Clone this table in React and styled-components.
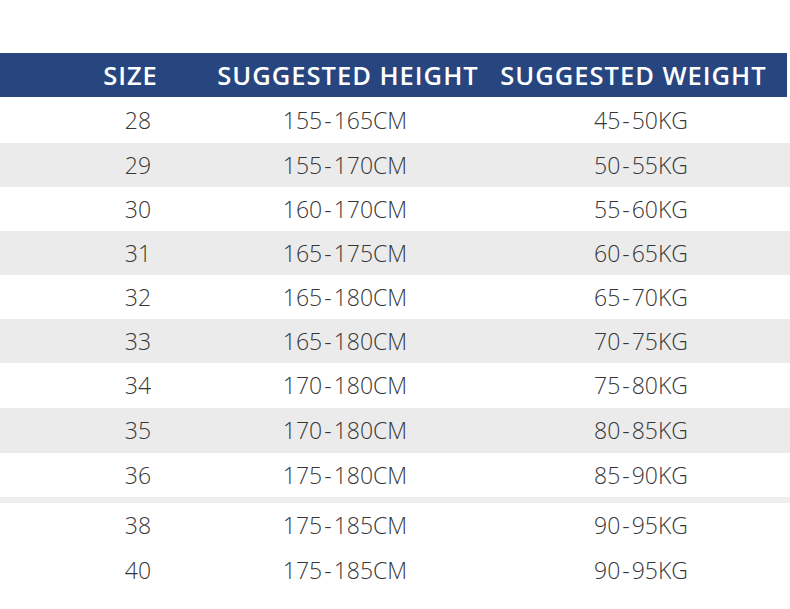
import React from 'react'
import styled, { createGlobalStyle } from 'styled-components'

const GlobalStyle = createGlobalStyle`
  html, body {
    margin: 0;
    padding: 0;
    background: #ffffff;
  }
`

const Page = styled.div`
  width: 790px;
  height: 609px;
  padding-top: 53px;
  box-sizing: border-box;
  background: #ffffff;
  overflow: hidden;
`

const HeaderBar = styled.div`
  display: grid;
  grid-template-columns: 171px 264px 307px;
  padding-left: 45px;
  margin-right: 3px;
  height: 44px;
  align-items: center;
  background: #27467f;
  color: #ffffff;
  font-family: 'Open Sans', 'Noto Sans', sans-serif;
  font-weight: 600;
  font-size: 25.5px;
  letter-spacing: 1px;
`

const HeaderCell = styled.div`
  text-align: center;
  white-space: nowrap;
  line-height: 1;
  padding-top: 2px;
`

const Row = styled.div`
  display: grid;
  grid-template-columns: 120px 294px 298px;
  padding-left: 78px;
  height: ${p => p.$h}px;
  align-items: center;
  background: ${p => (p.$shade ? '#ebebeb' : '#ffffff')};
  color: #363636;
  font-family: 'Open Sans', 'Noto Sans', sans-serif;
  font-weight: 300;
  font-size: 23px;
`

const Cell = styled.div`
  text-align: center;
  white-space: nowrap;
  line-height: 1;
`

const Dash = styled.span`
  margin: 0 2px;
`

const Divider = styled.div`
  height: 6px;
  background: #eeeeee;
`

const rows = [
  ['28', '155-165CM', '45-50KG', 46, false],
  ['29', '155-170CM', '50-55KG', 44, true],
  ['30', '160-170CM', '55-60KG', 44, false],
  ['31', '165-175CM', '60-65KG', 44, true],
  ['32', '165-180CM', '65-70KG', 44, false],
  ['33', '165-180CM', '70-75KG', 44, true],
  ['34', '170-180CM', '75-80KG', 45, false],
  ['35', '170-180CM', '80-85KG', 45, true],
  ['36', '175-180CM', '85-90KG', 44, false],
]

const tail = [
  ['38', '175-185CM', '90-95KG', 45],
  ['40', '175-185CM', '90-95KG', 45],
]

function Range({ value }) {
  const [a, b] = value.split('-')
  return (
    <>
      {a}<Dash>-</Dash>{b}
    </>
  )
}

function App() {
  return (
    <Page>
      <GlobalStyle />
      <HeaderBar>
        <HeaderCell>SIZE</HeaderCell>
        <HeaderCell>SUGGESTED HEIGHT</HeaderCell>
        <HeaderCell>SUGGESTED WEIGHT</HeaderCell>
      </HeaderBar>
      {rows.map(([size, height, weight, h, shade]) => (
        <Row key={size} $h={h} $shade={shade}>
          <Cell>{size}</Cell>
          <Cell><Range value={height} /></Cell>
          <Cell><Range value={weight} /></Cell>
        </Row>
      ))}
      <Divider />
      {tail.map(([size, height, weight, h]) => (
        <Row key={size} $h={h}>
          <Cell>{size}</Cell>
          <Cell><Range value={height} /></Cell>
          <Cell><Range value={weight} /></Cell>
        </Row>
      ))}
    </Page>
  )
}

export default App
